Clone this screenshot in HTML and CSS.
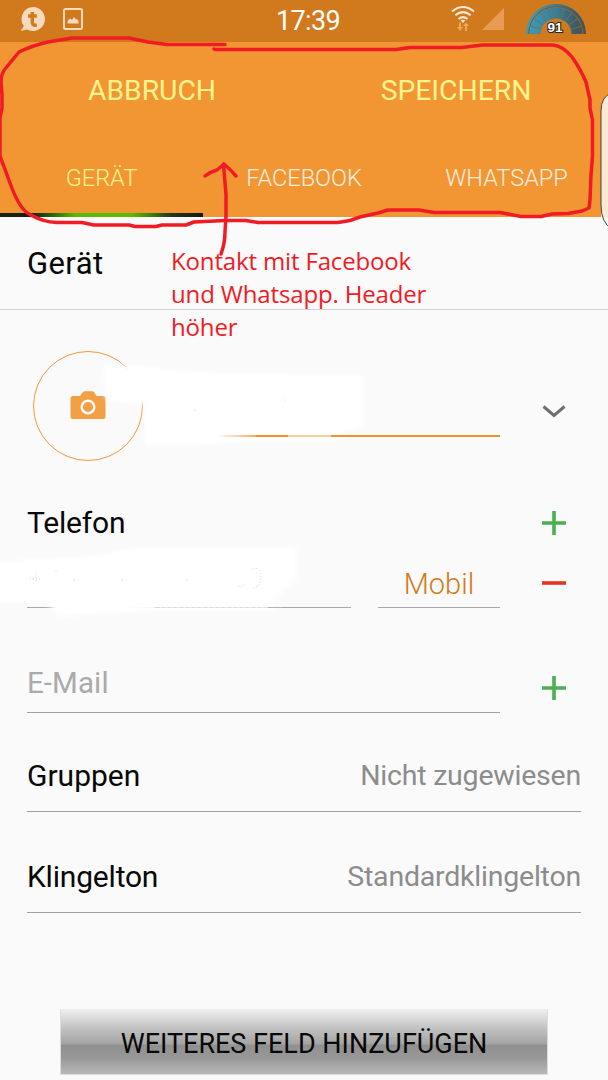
FILE: index.html
```html
<!DOCTYPE html>
<html lang="de">
<head>
<meta charset="utf-8">
<title>Kontakt bearbeiten</title>
<link rel="stylesheet" href="styles.css">
</head>
<body>
<div class="screen">
  <header class="statusbar">
    <div class="notifications">
      <svg class="talk" width="26" height="26" viewBox="0 0 26 26"><path fill="#f6dabd" d="M13 0a12 12 0 1 1-6 22.400L.800 24l3-5A12 12 0 0 1 13 0z"/><path fill="none" stroke="#d0791d" stroke-width="3.400" d="M12.300 5V15q0 3.300 3.200 3.300h1.300M8 9h8.800"/></svg>
      <svg class="picture" width="20" height="22" viewBox="0 0 20 22"><rect x="1" y="1" width="18" height="20" rx="1.500" fill="none" stroke="#f6dabd" stroke-width="2"/><path fill="#f6dabd" d="M4.500 15.500V13L7 10.500 9 12l2-3 2 2.500 1-.500 1.500 2v2.500z"/></svg>
    </div>
    <time class="clock">17:39</time>
    <div class="indicators">
      <svg class="wifi" width="24" height="26" viewBox="0 0 24 26"><g fill="none" stroke="#fbe8d6" stroke-width="2"><path d="M1 5.500q11-9 22 0"/><path d="M4.300 9.300q7.700-6.400 15.400 0"/><path d="M7.500 13q4.500-3.800 9 0"/></g><path fill="#fbe8d6" d="M9.700 14.500q2.300-1.600 4.600 0L12 17z"/><path fill="#eda762" d="M8 16.500h2V21h2l-3 4-3-4h2zM16 25h-2v-5h-2l3-3.500 3 3.500h-2z"/></svg>
      <svg class="signal" width="22" height="22" viewBox="0 0 22 22"><path fill="#e99b55" d="M0 22L22 0v22z"/></svg>
      <svg class="gauge" width="62" height="36" viewBox="0 0 62 36">
        <defs><linearGradient id="dial" gradientUnits="userSpaceOnUse" x1="0" y1="0" x2="62" y2="0"><stop offset="0" stop-color="#3a9fc2"/><stop offset=".5" stop-color="#367f9b"/><stop offset=".8" stop-color="#3a5d6b"/><stop offset="1" stop-color="#514b43"/></linearGradient></defs>
        <path d="M1 31a30 30 0 0 1 60 0h-3a27 27 0 0 0-54 0z" fill="url(#dial)"/>
        <path d="M10 31a21 21 0 0 1 42 0" fill="none" stroke="url(#dial)" stroke-width="11"/>
        <path d="M3.700 31a27.300 27.300 0 0 1 54.600 0" fill="none" stroke="#665f45" stroke-width="1"/>
        <path d="M10 31a21 21 0 0 1 42 0" fill="none" stroke="#8a6b3c" stroke-width="11" stroke-dasharray="0.800 5.800" stroke-dashoffset="-6"/>
        <text x="30" y="29" text-anchor="middle" class="gauge-value">91</text>
      </svg>
    </div>
  </header>

  <nav class="header">
    <div class="actions"><span>ABBRUCH</span><span>SPEICHERN</span></div>
    <div class="tabs"><span class="tab active">GERÄT</span><span class="tab">FACEBOOK</span><span class="tab">WHATSAPP</span></div>
  </nav>

  <main>
    <section class="account"><h1 class="label geraet">Gerät</h1></section>
    <section class="person">
      <div class="avatar"><svg width="36" height="30" viewBox="0 0 36 30"><path fill="#f39f46" d="M3 5h7l3-4q.700-.700 1.500-.700h8q.800 0 1.500.700l2.500 4H33q2.500 0 2.500 2.500v18q0 2.500-2.500 2.500H3Q.500 28 .500 25.500v-18Q.500 5 3 5z"/><circle cx="18" cy="16" r="6.300" fill="#f39f46" stroke="#fff" stroke-width="2.400"/></svg></div>
      <div class="name-field"></div>
      <svg class="chevron" width="24" height="14" viewBox="0 0 24 14"><path fill="none" stroke="#6f6f6f" stroke-width="3" d="M1.500 1.500L12 10.500l10.500-9"/></svg>
    </section>
    <section class="phone-head"><h2 class="label telefon">Telefon</h2><svg width="24" height="24" viewBox="0 0 24 24"><path stroke="#4caf50" stroke-width="3.600" d="M12 0v24M0 12h24"/></svg></section>
    <section class="phone-row">
      <div class="number"></div>
      <div class="kind">Mobil</div>
      <svg width="24" height="24" viewBox="0 0 24 24"><path stroke="#e93421" stroke-width="3.600" d="M0 12h24"/></svg>
    </section>
    <section class="mail-row"><div class="mail">E-Mail</div><svg width="24" height="24" viewBox="0 0 24 24"><path stroke="#4caf50" stroke-width="3.600" d="M12 0v24M0 12h24"/></svg></section>
    <section class="option"><span class="label gruppen">Gruppen</span><span class="value">Nicht zugewiesen</span></section>
    <section class="option ring"><span class="label klingelton">Klingelton</span><span class="value">Standardklingelton</span></section>
    <button class="add-field">WEITERES FELD HINZUFÜGEN</button>
  </main>

  <svg class="markup" width="608" height="1080" viewBox="0 0 608 1080">
    <defs>
      <filter id="soft" x="-5%" y="-10%" width="110%" height="120%"><feGaussianBlur stdDeviation="2"/></filter>
      <linearGradient id="fade" gradientUnits="userSpaceOnUse" x1="215" y1="0" x2="256" y2="0"><stop offset="0" stop-color="#f4912b" stop-opacity="0"/><stop offset="1" stop-color="#f4912b"/></linearGradient>
    </defs>
    <g fill="#fff" filter="url(#soft)">
      <path d="M104 364L235 375l128 1v50l-24 8v6h-90l-50 5-54 0-1-41-38-5z"/>
      <path d="M-5 562L80 558l60-10h156v31l-22 20v11H158l-98 6-15-14H-5z"/>
    </g>
    <path d="M215 436h42" stroke="url(#fade)" stroke-width="1.500"/>
    <path d="M287 436h45" stroke="#f8c080" stroke-width="1.500"/>
    <path d="M256 436h32M331 436h14" stroke="#f4912b" stroke-width="2"/>
    <path d="M155 607.500h115" stroke="#ddd" stroke-width="1" stroke-dasharray="5 1"/>
    <path d="M268 607.500h14" stroke="#b5b5b5" stroke-width="1"/>
    <g fill="#c5c5c5"><circle cx="195" cy="410" r=".6"/><circle cx="285" cy="400" r=".5"/><circle cx="33" cy="578" r=".6"/><circle cx="56" cy="571" r=".6"/><circle cx="74" cy="580" r=".6"/><circle cx="122" cy="580" r=".6"/><circle cx="187" cy="580" r=".6"/></g>
    <path d="M251 570q5-4 9 1 3 9-2 15l-6 2M238 586q5 2 7-3M30 579h11M36 574v9" fill="none" stroke="#d4d4d4" stroke-width="1" stroke-dasharray="1 2"/>
    <path d="M612 93q-11 3-11 18v106h11z" fill="#fce9d5"/>
    <path d="M612 93q-11 3-11 18v94q0 18 11 24" fill="none" stroke="#494440" stroke-width="1"/>
    <g fill="none" stroke="#f01b24" stroke-width="3.500" stroke-linecap="round" stroke-linejoin="round">
      <path d="M225 44.500H167L148 42 129 38H72L48 42Q31 46 19 52L5 69Q1 74 1 82L2 95V108L0 118V156L10 183Q20 211 31 215Q43 222 57 222.500H82L94 225H129L135 226.500H156L162 225H186L194 222L225 220.500H246L258 222.500H338L350 220.500L360 217L378 213L388 210H419L434 212.500H500L521 216.500H541L552 214L568 213.500L582 211L589 208L590 200L591 175L592.500 156V120L590 108V100L586 82Q581 70 572 57Q563 46 553 45H482L462 47.500H410L396 49.500H340L215 49.500L214 49"/>
      <path d="M221 254Q225 243 225 232L226 216V195L223.500 164M205 176Q210 172 217 170L224 164Q230 169 236 176"/>
    </g>
  </svg>
  <p class="note"><span class="note-line">Kontakt mit Facebook</span><span class="note-line">und Whatsapp. Header</span><span class="note-line">höher</span></p>
</div>
</body>
</html>
```
FILE: styles.css
```css
* { box-sizing: border-box; }
body { margin: 0; }
svg { display: block; flex: none; }
.screen { position: relative; width: 608px; height: 1080px; overflow: hidden; background: #fafafa; font-family: Roboto, sans-serif; color: #080808; }
.statusbar { height: 42px; background: #d0791d; display: grid; grid-template-columns: 1fr 80px 1fr; }
.notifications { display: flex; gap: 17px; padding: 7px 0 0 20px; }
.picture { margin-top: 1px; }
.clock { color: #fff; font-size: 27px; line-height: 42px; text-align: center; letter-spacing: -0.6px; padding-left: 8px; }
.indicators { display: flex; justify-content: flex-end; padding-right: 21px; }
.wifi { margin: 6px 7px 0 0; }
.signal { margin: 8px 21px 0 0; }
.gauge { margin-top: 3px; }
.gauge-value { font: bold 13.5px "Liberation Sans", sans-serif; fill: #fff; stroke: #252525; stroke-width: 2px; paint-order: stroke; }
.header { height: 175px; background: #f29633; display: grid; grid-template-rows: 98px 77px; }
.actions { display: grid; grid-template-columns: 1fr 1fr; text-align: center; font-size: 28.3px; line-height: 97px; color: #fff58c; }
.tabs { display: grid; grid-template-columns: 203px 202px 203px; height: 77px; }
.tab { height: 77px; text-align: center; font-size: 23.5px; font-weight: 300; line-height: 77px; color: #fdeee0; }
.active { color: #fff58c; background: linear-gradient(90deg, #172012 0 16%, #285d0b 25%, #59bb05 37% 65%, #3b850d 74%, #24371e 84%, #131a10) bottom / 100% 4px no-repeat; }
.label { margin: 0; font-size: 30px; font-weight: 400; line-height: 36px; white-space: nowrap; }
.geraet { font-size: 31px; letter-spacing: .4px; }
.telefon { letter-spacing: -.2px; }
.klingelton { letter-spacing: -.2px; }
.account { height: 93px; padding: 29px 27px 0; border-bottom: 1px solid #d4d4d4; }
.person { height: 185px; padding: 41px 42px 0 33px; display: flex; }
.avatar { width: 110px; height: 110px; border: 1.5px solid #f1983b; border-radius: 50%; display: grid; place-items: center; flex: none; }
.name-field { flex: 1; height: 86px; margin: 0 42px 0 7px; border-bottom: 2px solid #f4912b; }
.chevron { margin-top: 54px; }
.phone-head { height: 61px; padding: 10px 42px 0 27px; display: flex; justify-content: space-between; }
.phone-head svg { margin-top: 6px; }
.phone-row { height: 52px; padding: 0 42px 0 27px; display: grid; grid-template-columns: 324px 122px 24px; column-gap: 27px; justify-content: start; }
.phone-row svg { margin: 15px 0 0 15px; }
.number, .kind { height: 52px; border-bottom: 1px solid #a9a9a9; }
.kind { text-align: center; font-size: 29px; font-weight: 350; line-height: 56px; color: #d27a19; }
.mail-row { height: 105px; padding: 50px 42px 0 27px; display: flex; justify-content: space-between; }
.mail { width: 473px; height: 55px; border-bottom: 1px solid #a0a0a0; font-size: 29.5px; line-height: 51px; color: #aaa; letter-spacing: .1px; }
.mail-row svg { margin-top: 18px; }
.option { height: 99px; margin: 0 27px; padding-top: 45px; border-bottom: 1px solid #a0a0a0; display: flex; justify-content: space-between; }
.ring { height: 101px; padding-top: 47px; }
.value { font-size: 28.5px; line-height: 36px; color: #8c8c8c; white-space: nowrap; letter-spacing: -.22px; }
.add-field { display: block; width: 488px; height: 66px; margin: 96px 0 0 60px; padding: 4px 0 0; border: 1px solid #dcdcdc; border-top-color: #eee; background: linear-gradient(#eee, #c4c4c4 27%, #a4a4a4 53%, #909090 55%, #989898 75%, #b8b8b8); font: 400 27px Roboto, sans-serif; color: #080808; }
.markup { position: absolute; inset: 0; }
.note { position: absolute; left: 171px; top: 244px; margin: 0; font: 24px/33px "Open Sans", sans-serif; letter-spacing: -.15px; color: #f01b24; white-space: nowrap; }
.note-line { display: block; }
```
